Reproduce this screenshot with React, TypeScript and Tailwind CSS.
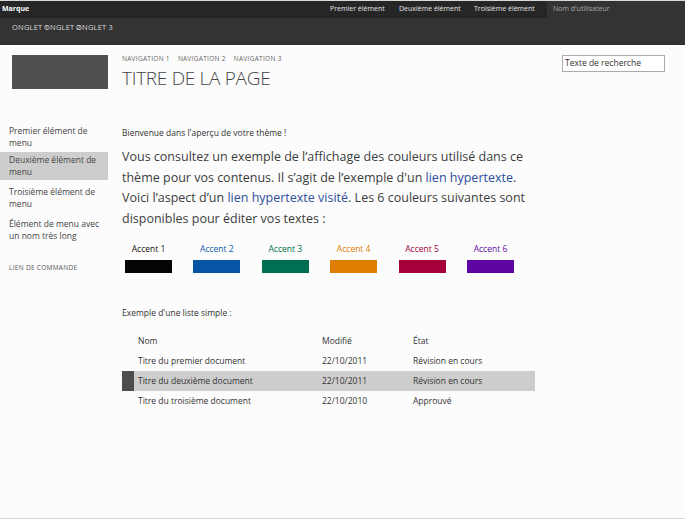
import React from "react";

const menuItems = [
  { label: "Premier élément de menu", active: false, mt: "mt-0" },
  { label: "Deuxième élément de menu", active: true, mt: "mt-[2px]" },
  { label: "Troisième élément de menu", active: false, mt: "mt-[4px]" },
  { label: "Élément de menu avec un nom très long", active: false, mt: "mt-[5px]" },
];

const accents = [
  { label: "Accent 1", text: "text-[#111111]", bg: "bg-[#050505]" },
  { label: "Accent 2", text: "text-[#0b5aa8]", bg: "bg-[#0753a4]" },
  { label: "Accent 3", text: "text-[#006f50]", bg: "bg-[#006e50]" },
  { label: "Accent 4", text: "text-[#e07c00]", bg: "bg-[#df7d00]" },
  { label: "Accent 5", text: "text-[#a0003a]", bg: "bg-[#a5003b]" },
  { label: "Accent 6", text: "text-[#5c0aa6]", bg: "bg-[#5e06a2]" },
];

const rows = [
  { name: "Titre du premier document", date: "22/10/2011", state: "Révision en cours", selected: false },
  { name: "Titre du deuxième document", date: "22/10/2011", state: "Révision en cours", selected: true },
  { name: "Titre du troisième document", date: "22/10/2010", state: "Approuvé", selected: false },
];

const App: React.FC = () => {
  return (
    <div className="w-[685px] h-[519px] overflow-hidden bg-[#fcfcfc] border-b border-[#d8d8d8] font-['Open_Sans',sans-serif] text-[#444]">
      {/* suite bar */}
      <div className="h-[18px] bg-[#262626] border-t border-[#d9d9d9] flex items-center text-[7px]">
        <span className="pl-[2px] w-[322px] font-bold text-white">Marque</span>
        <span className="w-[69px] pl-[8px] text-[#e6e6e6]">Premier élément</span>
        <span className="w-[75px] pl-[8px] text-[#e6e6e6]">Deuxième élément</span>
        <span className="w-[81px] pl-[8px] text-[#e6e6e6]">Troisième élément</span>
        <span className="flex-1 h-full flex items-center pl-[6px] bg-[#333333] text-[#a8a8a8]">Nom d'utilisateur</span>
      </div>
      <div className="h-[27px] bg-[#333333] pl-[12px] pt-[4px] flex text-[7.5px] text-[#d8d8d8] tracking-[0.2px]">
        <span className="w-[32px] whitespace-nowrap">ONGLET 1</span>
        <span className="w-[32px] whitespace-nowrap">ONGLET 2</span>
        <span className="whitespace-nowrap">ONGLET 3</span>
      </div>

      {/* title area */}
      <div className="h-[70px] flex items-start">
        <div className="ml-[12px] mt-[10px] w-[96px] h-[34px] bg-[#505050]" />
        <div className="ml-[14px] mt-[10px]">
          <div className="flex gap-[8px] text-[6.5px] leading-[8px] text-[#666] tracking-[0.3px]">
            <span>NAVIGATION 1</span>
            <span>NAVIGATION 2</span>
            <span>NAVIGATION 3</span>
          </div>
          <div className="mt-[4px] text-[19px] leading-[22px] font-light tracking-[-0.3px] text-[#444]">TITRE DE LA PAGE</div>
        </div>
        <div className="ml-auto mr-[20px] mt-[10px] w-[103px] h-[17px] border border-[#ababab] bg-white flex items-center pl-[2px] text-[8.5px] text-[#333]">
          Texte de recherche
        </div>
      </div>

      {/* body */}
      <div className="flex">
        <div className="w-[108px] pt-[8px] text-[8.5px] leading-[11.7px] text-[#444]">
          {menuItems.map((m) => (
            <div key={m.label} className={`${m.mt} py-[2px] px-[9px] ${m.active ? "bg-[#cdcdcd]" : ""}`}>
              {m.label}
            </div>
          ))}
          <div className="mt-[19px] px-[9px] text-[6.5px] leading-[9px] text-[#555] tracking-[0.3px]">LIEN DE COMMANDE</div>
        </div>

        <div className="ml-[14px] pt-[12px]">
          <div className="text-[8.5px] leading-[12px] text-[#333]">Bienvenue dans l'aperçu de votre thème !</div>
          <p className="mt-[8px] text-[12.5px] leading-[20.6px] text-[#3c3c3c] whitespace-nowrap">
            Vous consultez un exemple de l’affichage des couleurs utilisé dans ce
            <br />
            thème pour vos contenus. Il s’agit de l’exemple d'un{" "}
            <span className="text-[#2c4e9c]">lien hypertexte</span>.
            <br />
            Voici l’aspect d’un <span className="text-[#2c4e9c]">lien hypertexte visité</span>. Les 6 couleurs suivantes sont
            <br />
            disponibles pour éditer vos textes :
          </p>

          <div className="mt-[14px] ml-[3px] flex gap-[21.4px]">
            {accents.map((a) => (
              <div key={a.label} className="w-[47px] flex flex-col items-center">
                <span className={`text-[8.5px] leading-[12px] whitespace-nowrap ${a.text}`}>{a.label}</span>
                <div className={`mt-[5px] w-[47px] h-[13px] ${a.bg}`} />
              </div>
            ))}
          </div>

          <div className="mt-[34px] text-[8.5px] leading-[12px] text-[#333]">Exemple d'une liste simple :</div>

          <div className="mt-[12px] w-[413px] text-[8.5px] text-[#333]">
            <div className="h-[20px] flex items-center">
              <div className="w-[12px]" />
              <div className="w-[188px] pl-[4px]">Nom</div>
              <div className="w-[91px]">Modifié</div>
              <div className="flex-1">État</div>
            </div>
            {rows.map((r) => (
              <div key={r.name} className={`h-[20px] flex items-stretch ${r.selected ? "bg-[#cdcdcd]" : ""}`}>
                <div className={`w-[12px] ${r.selected ? "bg-[#4d4d4d]" : ""}`} />
                <div className="w-[188px] pl-[4px] flex items-center">{r.name}</div>
                <div className="w-[91px] flex items-center">{r.date}</div>
                <div className="flex-1 flex items-center">{r.state}</div>
              </div>
            ))}
          </div>
        </div>
      </div>
    </div>
  );
};

export default App;
